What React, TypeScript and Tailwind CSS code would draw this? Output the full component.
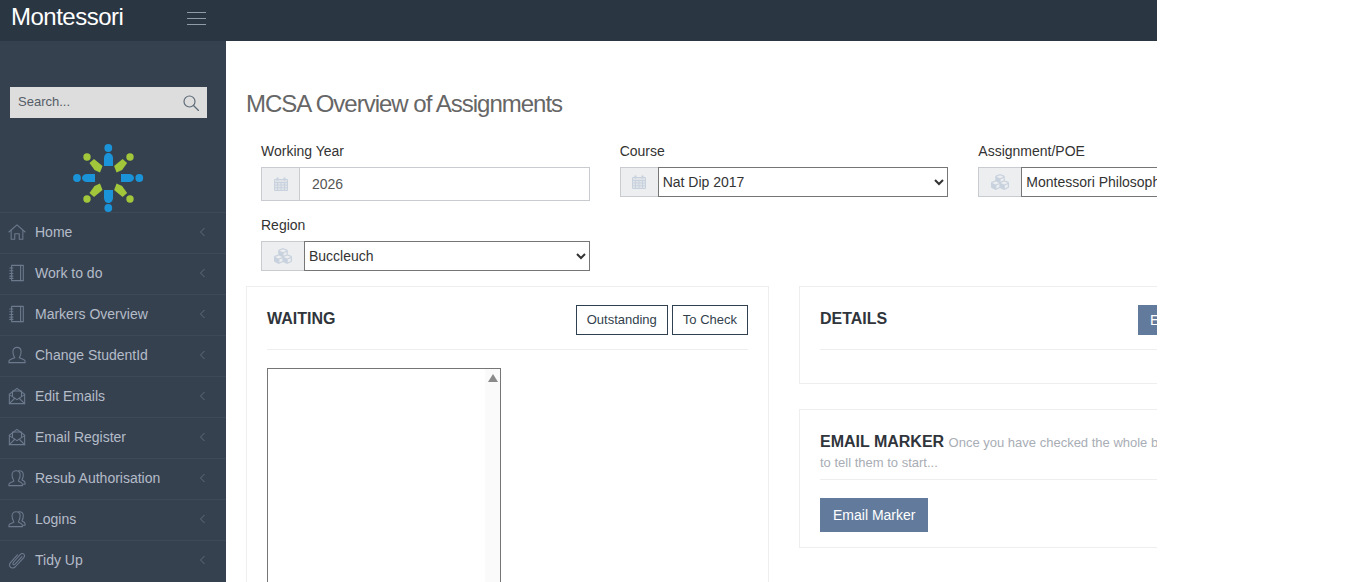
import { ReactNode } from "react";
import { FaCubes } from "react-icons/fa";

const stroke = { fill: "none", stroke: "currentColor", strokeWidth: 1.2, strokeLinecap: "round" as const, strokeLinejoin: "round" as const };

const HomeIcon = () => (
  <svg width="18" height="18" viewBox="0 0 20 20" {...stroke}>
    <path d="M1 10 L10 2 L19 10" />
    <path d="M3.5 8.5 V18 H7.5 V12 H12.5 V18 H16.5 V8.5" />
  </svg>
);

const NotebookIcon = () => (
  <svg width="18" height="18" viewBox="0 0 20 20" {...stroke}>
    <path d="M4 1.5 H17 V18.5 H4 Z" />
    <path d="M14 1.5 V18.5" />
    <path d="M2 4.5 H5.5 M2 7.5 H5.5 M2 10.5 H5.5 M2 13.5 H5.5 M2 16 H5.5" />
  </svg>
);

const UserFemaleIcon = () => (
  <svg width="18" height="18" viewBox="0 0 20 20" {...stroke}>
    <path d="M6.5 11 C5.5 9 5.5 7.5 5.5 6 C5.5 3 7.5 1.5 10 1.5 C12.5 1.5 14.5 3 14.5 6 C14.5 7.5 14.5 9 13.5 11 L12.5 13 C14 14 19 14.5 19 17 V18.5 H1 V17 C1 14.5 6 14 7.5 13 Z" />
  </svg>
);

const EnvelopeOpenIcon = () => (
  <svg width="18" height="18" viewBox="0 0 20 20" {...stroke}>
    <path d="M1.5 8 L10 1.5 L18.5 8 V18.5 H1.5 Z" />
    <path d="M5 10.5 V4.5 H15 V10.5" />
    <path d="M1.5 8.5 L10 14 L18.5 8.5" />
    <path d="M1.5 18.5 L7.5 12.5 M18.5 18.5 L12.5 12.5" />
  </svg>
);

const PeopleIcon = () => (
  <svg width="18" height="18" viewBox="0 0 20 20" {...stroke}>
    <path d="M6 12 C4.5 10 4.5 8.5 4.5 6.5 C4.5 3.5 6.5 2 9 2 C11.5 2 13.5 3.5 13.5 6.5 C13.5 8.5 13.5 10 12 12 L11.5 13.5 C13 14.5 16 15 16 17 V18.5 H1 V17 C1 15 5 14.5 6.5 13.5 Z" />
    <path d="M12 2 C15 1.5 17 3.5 17 6.5 C17 8.5 16.5 10.5 15.5 12 C16.5 13 19 13.5 19 15.5 V17 H16.5" />
  </svg>
);

const PaperClipIcon = () => (
  <svg width="18" height="18" viewBox="0 0 20 20" {...stroke}>
    <path d="M6 12.5 L13.5 4 C14.8 2.6 16.4 2.5 17.5 3.5 C18.7 4.6 18.5 6.2 17.3 7.6 L8.2 17.5 C6.5 19.2 4 19.2 2.7 17.8 C1.4 16.4 1.6 14.2 3 12.6 L10.5 4.3" />
    <path d="M6 12.5 C5.2 13.6 5.2 14.5 5.8 15 C6.4 15.6 7.3 15.3 8.2 14.4 L15.5 6.2" />
  </svg>
);

const SearchIcon = () => (
  <svg width="16" height="16" viewBox="0 0 16 16" {...stroke}>
    <circle cx="6.5" cy="6.5" r="5.5" />
    <path d="M10.5 10.5 L15.5 15.5" />
  </svg>
);

const CalendarIcon = () => (
  <svg width="14" height="14" viewBox="0 0 14 14" fill="none" stroke="currentColor" strokeWidth="1">
    <path d="M.5 2.5 H13.5 V13.5 H.5 Z" fill="currentColor" fillOpacity="0.35" />
    <path d="M.5 5.5 H13.5 M.5 8 H13.5 M.5 10.8 H13.5 M3.5 5.5 V13.5 M7 5.5 V13.5 M10.5 5.5 V13.5" />
    <path d="M3.5 .5 V3.5 M10.5 .5 V3.5" strokeWidth="2" />
  </svg>
);

const Logo = () => (
  <svg width="73" height="70" viewBox="0 0 73 70">
    <g fill="#1b93d8">
      <circle cx="36.3" cy="5" r="3.9" />
      <circle cx="36.3" cy="65" r="3.9" />
      <circle cx="5" cy="35" r="3.9" />
      <circle cx="67.3" cy="35" r="3.9" />
      <path d="M32 23 V15 C32 12 34 10 36.3 10 C38.6 10 41 12 41 15 V23 Z" />
      <path d="M32 47 V55 C32 58 34 60 36.3 60 C38.6 60 41 58 41 55 V47 Z" />
      <path d="M23 31 H15 C12 31 10 33 10 35 C10 37 12 39 15 39 H23 Z" />
      <path d="M49 31 H57 C60 31 62 33 62 35 C62 37 60 39 57 39 H49 Z" />
    </g>
    <g fill="#a2c73b">
      <circle cx="15" cy="14" r="3.7" />
      <circle cx="58" cy="14" r="3.7" />
      <circle cx="15" cy="56" r="3.7" />
      <circle cx="58" cy="56" r="3.7" />
      <path d="M17.5 20 L22 16 L30.5 23 L28 29.5 L22.5 27 Z" />
      <path d="M55.1 20 L50.6 16 L42.1 23 L44.6 29.5 L50.1 27 Z" />
      <path d="M17.5 50 L22 54 L30.5 47 L28 40.5 L22.5 43 Z" />
      <path d="M55.1 50 L50.6 54 L42.1 47 L44.6 40.5 L50.1 43 Z" />
    </g>
  </svg>
);

const menu: { label: string; icon: ReactNode }[] = [
  { label: "Home", icon: <HomeIcon /> },
  { label: "Work to do", icon: <NotebookIcon /> },
  { label: "Markers Overview", icon: <NotebookIcon /> },
  { label: "Change StudentId", icon: <UserFemaleIcon /> },
  { label: "Edit Emails", icon: <EnvelopeOpenIcon /> },
  { label: "Email Register", icon: <EnvelopeOpenIcon /> },
  { label: "Resub Authorisation", icon: <PeopleIcon /> },
  { label: "Logins", icon: <PeopleIcon /> },
  { label: "Tidy Up", icon: <PaperClipIcon /> },
];

function Sidebar() {
  return (
    <div className="w-[226px] shrink-0 bg-[#364150] h-[541px] overflow-hidden">
      <div className="pt-[46px] pl-[10px] pr-[19px]">
        <div className="h-[31px] bg-[#dddddd] flex items-center justify-between pl-2 pr-2 pb-[2px] text-[13px] text-[#555c66]">
          <span>Search...</span>
          <span className="text-[#5f6b78] pt-[2px]"><SearchIcon /></span>
        </div>
      </div>
      <div className="pt-[25px] pl-[72px] h-[94px]">
        <Logo />
      </div>
      {menu.map((m) => (
        <div key={m.label} className="h-[41px] border-t border-[#3d4957] flex items-center pl-[8px] pr-[20px] pb-[2px] text-[14px] text-[#b4bcc8]">
          <span className="w-[27px] text-[#6b7a8c]">{m.icon}</span>
          <span className="flex-1">{m.label}</span>
          <svg width="7" height="10" viewBox="0 0 7 10" fill="none" stroke="#5f6b78" strokeWidth="1">
            <path d="M5.5 1 L1.5 5 L5.5 9" />
          </svg>
        </div>
      ))}
    </div>
  );
}

function Addon({ w, h, children }: { w: string; h: string; children: ReactNode }) {
  return (
    <span className={`${w} ${h} shrink-0 bg-[#edeef0] border border-r-0 border-[#c8ccd0] flex items-center justify-center text-[#c8d2de]`}>
      {children}
    </span>
  );
}

function Label({ children }: { children: ReactNode }) {
  return <div className="text-[14px] leading-[20px] text-[#333333] mb-[6px]">{children}</div>;
}

function Filters() {
  return (
    <div className="w-[1076px] grid grid-cols-3 gap-x-[30px] px-[15px]">
      <div>
        <Label>Working Year</Label>
        <div className="flex h-[34px]">
          <Addon w="w-[38px]" h="h-[34px]"><CalendarIcon /></Addon>
          <div className="flex-1 border border-[#c8ccd0] pl-3 flex items-center text-[14px] text-[#555555]">2026</div>
        </div>
      </div>
      <div>
        <Label>Course</Label>
        <div className="flex h-[30px]">
          <Addon w="w-[38px]" h="h-[30px]"><CalendarIcon /></Addon>
          <select className="flex-1 min-w-0 h-[30px] border border-[#767676] text-[14px] text-[#333333] bg-white">
            <option>Nat Dip 2017</option>
          </select>
        </div>
      </div>
      <div>
        <Label>Assignment/POE</Label>
        <div className="flex h-[30px]">
          <Addon w="w-[43px]" h="h-[30px]"><FaCubes size={18} /></Addon>
          <select className="flex-1 min-w-0 h-[30px] border border-[#767676] text-[14px] text-[#333333] bg-white">
            <option>Montessori Philosophy</option>
          </select>
        </div>
      </div>
      <div className="mt-[14px]">
        <Label>Region</Label>
        <div className="flex h-[30px]">
          <Addon w="w-[43px]" h="h-[30px]"><FaCubes size={18} /></Addon>
          <select className="flex-1 min-w-0 h-[30px] border border-[#767676] text-[14px] text-[#333333] bg-white">
            <option>Buccleuch</option>
          </select>
        </div>
      </div>
    </div>
  );
}

function OutlineBtn({ children }: { children: ReactNode }) {
  return (
    <button className="h-[30px] px-[10px] border border-[#2f4050] text-[13px] text-[#333f4d] bg-white">{children}</button>
  );
}

function Waiting() {
  return (
    <div className="w-[523px] h-[320px] shrink-0 border border-[#eeeeee] px-5 pt-[18px]">
      <div className="flex items-center justify-between h-[30px]">
        <span className="text-[16px] font-bold text-[#2f353b] pb-[2px]">WAITING</span>
        <div className="flex gap-[4px]">
          <OutlineBtn>Outstanding</OutlineBtn>
          <OutlineBtn>To Check</OutlineBtn>
        </div>
      </div>
      <div className="mt-[14px] border-t border-[#eeeeee]" />
      <div className="mt-[18px] w-[234px] h-[260px] border border-[#767676] flex justify-end">
        <div className="w-[15px] bg-[#fafafa] flex justify-center pt-[5px]">
          <span className="w-0 h-0 border-x-[5px] border-x-transparent border-b-[8px] border-b-[#8a8a8a]" />
        </div>
      </div>
    </div>
  );
}

function RightColumn() {
  return (
    <div className="w-[523px] shrink-0">
      <div className="h-[98px] border border-[#eeeeee] px-5 pt-[18px]">
        <div className="flex items-center justify-between h-[30px]">
          <span className="text-[16px] font-bold text-[#2f353b] pb-[2px]">DETAILS</span>
          <button className="h-[30px] w-[163px] bg-[#627a9b] text-white text-[14px] text-left pl-[12px]">Edit</button>
        </div>
        <div className="mt-[14px] border-t border-[#eeeeee]" />
      </div>
      <div className="mt-[25px] h-[139px] border border-[#eeeeee] px-5 pt-[22px]">
        <div className="h-[48px] border-b border-[#eeeeee] leading-[19px]">
          <span className="text-[16px] font-bold text-[#2f353b]">EMAIL MARKER</span>{" "}
          <span className="text-[13px] text-[#a8adb5]">Once you have checked the whole batch, email the marker<br />to tell them to start...</span>
        </div>
        <button className="mt-[18px] h-[34px] px-[13px] bg-[#627a9b] text-white text-[14px]">Email Marker</button>
      </div>
    </div>
  );
}

export default function App() {
  return (
    <div className="w-[1348px] h-[582px] bg-white overflow-hidden font-['Liberation_Sans',Arial,sans-serif]">
      <div className="w-[1157px] h-[582px] overflow-hidden">
        <div className="h-[41px] bg-[#2b3643] flex items-center">
          <span className="ml-[11px] w-[176px] pb-[8px] text-[24px] leading-[34px] tracking-[-0.5px] text-white">Montessori</span>
          <div className="w-[19px] flex flex-col gap-[5px] mb-[5px]">
            <span className="h-px bg-[#8e9ba9]" />
            <span className="h-px bg-[#8e9ba9]" />
            <span className="h-px bg-[#8e9ba9]" />
          </div>
        </div>
        <div className="flex">
          <Sidebar />
          <div className="pl-5 min-w-0 overflow-hidden w-[931px]">
            <h1 className="mt-[49px] text-[24px] leading-[28px] tracking-[-1px] text-[#666666]">MCSA Overview of Assignments</h1>
            <div className="mt-[23px]"><Filters /></div>
            <div className="mt-[15px] flex gap-[30px] w-[1076px]">
              <Waiting />
              <RightColumn />
            </div>
          </div>
        </div>
      </div>
    </div>
  );
}
